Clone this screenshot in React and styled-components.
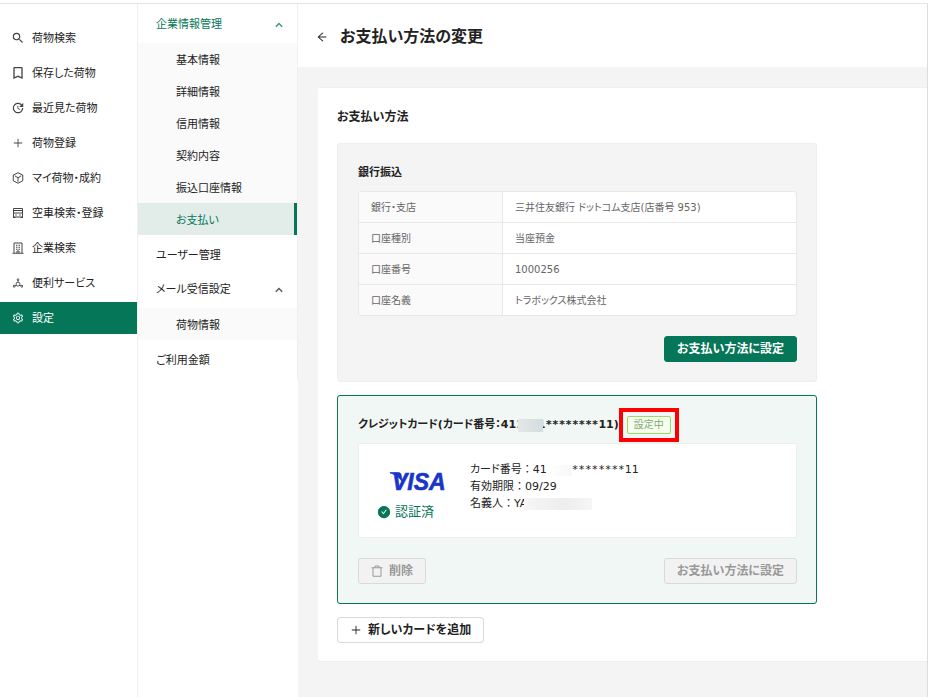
import React from 'react';
import styled, { createGlobalStyle } from 'styled-components';
import {
  AiFillCheckCircle,
  AiOutlineArrowLeft,
  AiOutlineDeploymentUnit,
  AiOutlinePlus,
  AiOutlineSetting,
} from 'react-icons/ai';
import { MdBookmarkBorder, MdSearch, MdUpdate } from 'react-icons/md';

const GlobalStyle = createGlobalStyle`
  :root {
    --green: #057657;
    --text: #222;
    --grey: #666;
    --border: #e8e8e8;
    --background: #f4f4f4;
  }

  * {
    box-sizing: border-box;
  }

  body {
    margin: 0;
    color: var(--text);
    background: #fff;
    font-family: 'DejaVu Sans', 'Noto Sans CJK JP', sans-serif;
    font-size: 11px;
    line-height: 17px;
    font-feature-settings: 'palt';
  }
`;

const CubeIcon = () => (
  <svg width="12" height="12" viewBox="0 0 24 24" fill="none" stroke="currentColor" strokeWidth="2">
    <path d="M12 1.500 21.500 6v11.500L12 22.500 2.500 17.500V6z" />
    <path d="M5.500 7.500 12 11.500l6.500-4M12 11.500v8" />
  </svg>
);

const TruckIcon = () => (
  <svg width="12" height="12" viewBox="0 0 24 24" fill="none" stroke="currentColor" strokeWidth="2">
    <path d="M3 3h18v17H3zM3 12h18M3 7h18M6.500 16h3M14.500 16h3M2 21h5M17 21h5" />
  </svg>
);

const BuildingIcon = () => (
  <svg width="12" height="12" viewBox="0 0 24 24" fill="none" stroke="currentColor" strokeWidth="2">
    <path d="M4 22V2h16v20M1 22.500h22M10 22v-4h4v4" />
    <path d="M8 6.500h3M13 6.500h3M8 10.500h3M13 10.500h3M8 14.500h3M13 14.500h3" />
  </svg>
);

const TrashIcon = () => (
  <svg width="12" height="12" viewBox="0 0 24 24" fill="none" stroke="currentColor" strokeWidth="2">
    <path d="M1 5.500h22M4 5.500V22.500h16V5.500M8 5V2h8v3" />
  </svg>
);

const Chevron = () => (
  <svg width="8" height="6" viewBox="0 0 8 6" fill="none" stroke="currentColor" strokeWidth="1.500" opacity=".75">
    <path d="M.8 4.800 4 1.500l3.200 3.300" />
  </svg>
);

const VisaLogo = () => (
  <Visa viewBox="0 0 56 20" role="img" aria-label="VISA">
    <path d="M0 1.500h8.500c1.500 0 2.300.7 2.600 2l1.800 9C10.500 7 6 3.500 0 2z" />
    <text x="2" y="19">VISA</text>
  </Visa>
);

const navItems = [
  { label: '荷物検索', icon: <MdSearch size={14} /> },
  { label: '保存した荷物', icon: <MdBookmarkBorder size={16} /> },
  { label: '最近見た荷物', icon: <MdUpdate size={14} /> },
  { label: '荷物登録', icon: <AiOutlinePlus size={12} /> },
  { label: 'マイ荷物・成約', icon: <CubeIcon /> },
  { label: '空車検索・登録', icon: <TruckIcon /> },
  { label: '企業検索', icon: <BuildingIcon /> },
  { label: '便利サービス', icon: <AiOutlineDeploymentUnit size={12} /> },
  { label: '設定', icon: <AiOutlineSetting size={12} />, active: true },
];

const companyItems = ['基本情報', '詳細情報', '信用情報', '契約内容', '振込口座情報', 'お支払い'];

const bankRows = [
  ['銀行・支店', '三井住友銀行 ドットコム支店(店番号 953)'],
  ['口座種別', '当座預金'],
  ['口座番号', '1000256'],
  ['口座名義', 'トラボックス株式会社'],
];

const App = () => (
  <Page>
    <GlobalStyle />
    <Sidebar>
      {navItems.map(({ label, icon, active }) => (
        <NavLink key={label} href="#" $active={active}>
          <NavIcon $active={active}>{icon}</NavIcon>
          {label}
        </NavLink>
      ))}
    </Sidebar>

    <SubMenu>
      <MenuToggle type="button" $open>
        企業情報管理
        <Chevron />
      </MenuToggle>
      <MenuGroup>
        {companyItems.map(label => (
          <GroupLink key={label} href="#" $active={label === 'お支払い'}>
            {label}
          </GroupLink>
        ))}
      </MenuGroup>
      <MenuLink href="#">ユーザー管理</MenuLink>
      <MenuToggle type="button">
        メール受信設定
        <Chevron />
      </MenuToggle>
      <MenuGroup>
        <GroupLink href="#">荷物情報</GroupLink>
      </MenuGroup>
      <MenuLink href="#">ご利用金額</MenuLink>
    </SubMenu>

    <Main>
      <Header>
        <BackLink href="#" aria-label="戻る">
          <AiOutlineArrowLeft size={12} />
        </BackLink>
        <Title>お支払い方法の変更</Title>
      </Header>

      <Content>
        <SectionTitle>お支払い方法</SectionTitle>
        <Methods>
          <Method>
            <MethodTitle>銀行振込</MethodTitle>
            <BankTable>
              <tbody>
                {bankRows.map(([name, value]) => (
                  <tr key={name}>
                    <th scope="row">{name}</th>
                    <td>{value}</td>
                  </tr>
                ))}
              </tbody>
            </BankTable>
            <Actions>
              <Button type="button" $primary>お支払い方法に設定</Button>
            </Actions>
          </Method>

          <Method $selected>
            <MethodTitle>
              クレジットカード(カード番号：411
              <NumberMask />1<Stars>********</Stars>11)
              <Status>
                設定中
                <Highlight />
              </Status>
            </MethodTitle>
            <CardBox>
              <Brand>
                <VisaLogo />
                <Verified>
                  <AiFillCheckCircle size={14} />
                  認証済
                </Verified>
              </Brand>
              <div>
                <Detail>カード番号<Colon>：</Colon>41<DetailMask /><Stars>********</Stars>11</Detail>
                <Detail>有効期限<Colon>：</Colon>09/29</Detail>
                <Detail>名義人<Colon>：</Colon>YA<NameMask /></Detail>
              </div>
            </CardBox>
            <Actions $spread>
              <Button type="button" disabled>
                <TrashIcon />
                削除
              </Button>
              <Button type="button" disabled>お支払い方法に設定</Button>
            </Actions>
          </Method>

          <Button type="button">
            <AiOutlinePlus size={12} />
            新しいカードを追加
          </Button>
        </Methods>
      </Content>
    </Main>
  </Page>
);

const Page = styled.div`
  display: flex;
  margin-top: 3px;
  min-height: calc(100vh - 3px);
  border-top: 1px solid #e4e4e4;
`;

const Sidebar = styled.nav`
  display: flex;
  flex: 0 0 138px;
  flex-direction: column;
  gap: 3px;
  padding-top: 18px;
  border-right: 1px solid #f0f0f0;
`;

const NavLink = styled.a`
  display: flex;
  align-items: center;
  gap: 7px;
  height: 32px;
  padding-left: 11px;
  color: ${props => (props.$active ? '#fff' : 'var(--text)')};
  background: ${props => (props.$active ? 'var(--green)' : 'transparent')};
  text-decoration: none;
  white-space: nowrap;
`;

const NavIcon = styled.span`
  display: flex;
  justify-content: center;
  width: 14px;
  color: ${props => (props.$active ? '#fff' : '#444')};

  svg {
    flex: none;
  }
`;

const SubMenu = styled.nav`
  flex: 0 0 160px;
  align-self: flex-start;
  padding: 4px 0 2px;
  border-right: 1px solid #f0f0f0;
`;

const MenuLink = styled.a`
  display: flex;
  align-items: center;
  height: 32px;
  margin: 3px 0;
  padding: 2px 0 0 18px;
  color: var(--text);
  text-decoration: none;
`;

const MenuToggle = styled.button`
  display: flex;
  align-items: center;
  justify-content: space-between;
  width: 100%;
  height: 32px;
  margin: 0 0 3px;
  padding: 1px 14px 0 18px;
  border: 0;
  background: none;
  color: ${props => (props.$open ? 'var(--green)' : 'var(--text)')};
  font: inherit;
`;

const MenuGroup = styled.div`
  background: #fafafa;
`;

const GroupLink = styled.a`
  display: flex;
  align-items: center;
  height: 32px;
  padding: 2px 0 0 38px;
  border-right: 3px solid ${props => (props.$active ? 'var(--green)' : 'transparent')};
  background: ${props => (props.$active ? '#e2edea' : 'transparent')};
  color: ${props => (props.$active ? 'var(--green)' : 'var(--text)')};
  text-decoration: none;
`;

const Main = styled.main`
  flex: 1;
  min-width: 0;
  border-right: 1px solid #ddd;
  background: var(--background);
`;

const Header = styled.header`
  display: flex;
  align-items: center;
  gap: 12px;
  height: 63px;
  padding: 2px 0 0 18px;
  background: #fff;
`;

const BackLink = styled.a`
  display: flex;
  color: var(--text);
`;

const Title = styled.h1`
  margin: 0;
  font-size: 16px;
  line-height: 24px;
`;

const Content = styled.section`
  margin: 20px 0 0 20px;
  padding: 19px 18px 18px 19px;
  border-top: 1px solid #eee;
  border-bottom: 1px solid #eee;
  border-radius: 2px 0 0 2px;
  background: #fff;
`;

const SectionTitle = styled.h2`
  margin: 0 0 16px;
  font-size: 12px;
  line-height: 20px;
`;

const Methods = styled.div`
  display: flex;
  flex-direction: column;
  align-items: flex-start;
  gap: 13px;
  max-width: 480px;
`;

const Method = styled.section`
  width: 100%;
  padding: 20px 19px 19px 20px;
  border: 1px solid ${props => (props.$selected ? 'var(--green)' : '#eee')};
  border-radius: 3px;
  background: ${props => (props.$selected ? '#f1f7f5' : 'var(--background)')};
`;

const MethodTitle = styled.h3`
  display: flex;
  align-items: center;
  height: 18px;
  margin: 0 0 9px;
  font-size: 11px;
  line-height: 18px;
  white-space: nowrap;
`;

const BankTable = styled.table`
  width: 100%;
  border: 1px solid var(--border);
  border-radius: 3px;
  border-spacing: 0;
  overflow: hidden;
  background: #fff;
  color: var(--grey);
  font-size: 10px;
  line-height: 15px;

  th,
  td {
    padding: 8px 12px 7px;
    text-align: left;
    font-weight: normal;
  }

  th {
    width: 144px;
    border-right: 1px solid var(--border);
    background: #fafafa;
  }

  tr + tr > * {
    border-top: 1px solid var(--border);
  }
`;

const Actions = styled.div`
  display: flex;
  justify-content: ${props => (props.$spread ? 'space-between' : 'flex-end')};
  margin-top: 20px;
`;

const buttonColor = props => {
  if (props.disabled) return '#999';
  return props.$primary ? '#fff' : 'var(--text)';
};

const buttonBackground = props => {
  if (props.disabled) return '#f2f2f2';
  return props.$primary ? 'var(--green)' : '#fff';
};

const Button = styled.button`
  display: flex;
  align-items: center;
  gap: 6px;
  height: 26px;
  padding: 0 12px;
  border: 1px solid ${props => (props.$primary ? 'var(--green)' : '#d9d9d9')};
  border-radius: 3px;
  background: ${buttonBackground};
  color: ${buttonColor};
  font: bold 12px/18px 'DejaVu Sans', 'Noto Sans CJK JP', sans-serif;
  font-feature-settings: 'palt';
  white-space: nowrap;
`;

const Stars = styled.span`
  font-family: 'DejaVu Sans Mono', monospace;
`;

const Colon = styled.span`
  font-feature-settings: normal;
`;

const Detail = styled.div`
  height: 17px;
  white-space: nowrap;
`;

const NumberMask = styled.span`
  position: relative;
  width: 25px;
  height: 13px;
  margin: 0 -5px 0 -6px;
  background: linear-gradient(90deg, #e3e7e7, #d5dcdf);
`;

const DetailMask = styled.span`
  display: inline-block;
  width: 25px;
  height: 11px;
  vertical-align: middle;
  background: linear-gradient(90deg, #fff, #f8f8f8);
`;

const NameMask = styled.span`
  position: relative;
  display: inline-block;
  width: 68px;
  height: 12px;
  margin-left: -3px;
  vertical-align: text-bottom;
  background: linear-gradient(90deg, #f6f6f6, #ededed 60%, #f6f6f6);
`;

const Status = styled.span`
  position: relative;
  margin-left: 8px;
  padding: 0 6px;
  border: 1px solid #95de64;
  border-radius: 2px;
  background: #f6ffed;
  color: #7faa78;
  font-size: 10px;
  font-weight: normal;
  line-height: 16px;
`;

const Highlight = styled.span`
  position: absolute;
  inset: -9px;
  border: 4px solid #f00;
`;

const CardBox = styled.div`
  display: flex;
  min-height: 94px;
  padding: 17px 18px 16px;
  border: 1px solid #eee;
  border-radius: 2px;
  background: #fff;
`;

const Brand = styled.div`
  display: flex;
  flex-direction: column;
  flex: 0 0 93px;
  gap: 12px;
  padding-top: 10px;
`;

const Visa = styled.svg`
  width: 56px;
  height: 20px;
  margin-left: 13px;
  overflow: visible;
  fill: #1a35c8;
  stroke: #1a35c8;
  stroke-width: 0.6;
  font: italic bold 23px 'Liberation Sans', sans-serif;
`;

const Verified = styled.div`
  display: flex;
  align-items: center;
  gap: 4px;
  color: var(--green);
  font-size: 13px;
  line-height: 18px;
`;

export default App;
